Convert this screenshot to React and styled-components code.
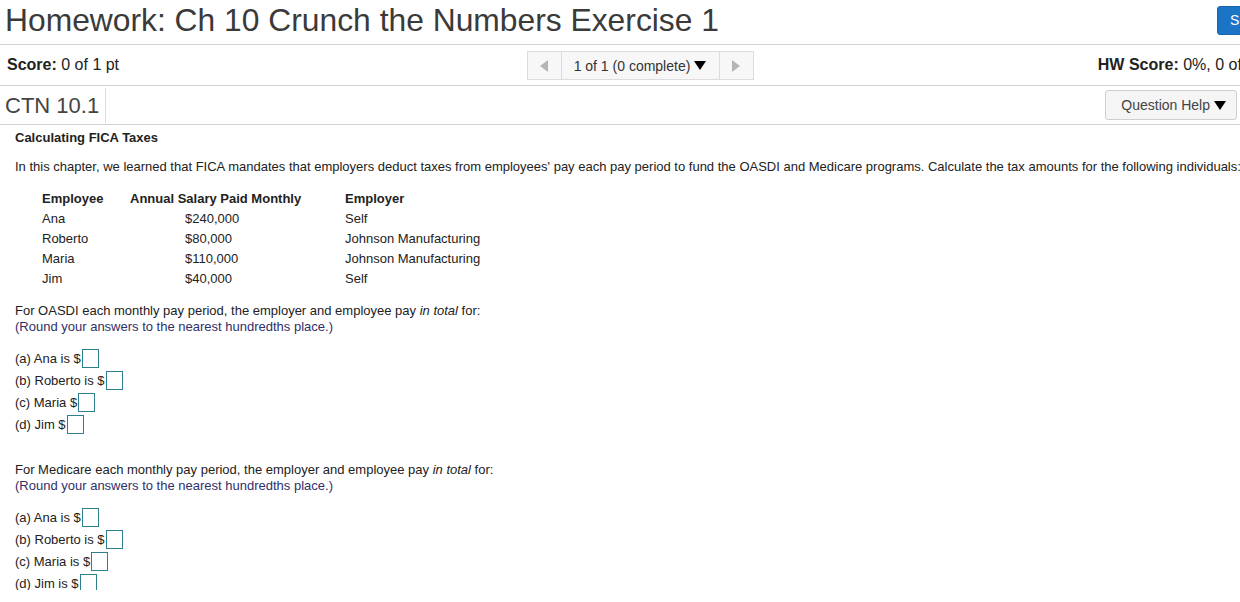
import React from "react";
import styled, { createGlobalStyle } from "styled-components";

const Global = createGlobalStyle`
  html, body { margin: 0; padding: 0; background: #fff; overflow: hidden; }
  body { font-family: "Liberation Sans", Arial, sans-serif; }
`;

const Page = styled.div`
  width: 1280px;
  height: 590px;
  overflow: hidden;
  background: #fff;
`;

const TitleBar = styled.header`
  height: 45px;
  box-sizing: border-box;
  border-bottom: 1px solid #d2d2d2;
  display: flex;
  align-items: center;
  justify-content: space-between;
  padding: 0 5px;
`;

const Title = styled.h1`
  margin: 0;
  margin-top: -4px;
  font-size: 31.8px;
  font-weight: normal;
  color: #3a3a3a;
  line-height: 37px;
  white-space: nowrap;
`;

const SaveButton = styled.button`
  height: 29px;
  margin-top: -4px;
  padding: 0 12px;
  background: #1b74c5;
  color: #fff;
  border: 1px solid #1766ad;
  border-radius: 3px;
  font-family: inherit;
  font-size: 14px;
`;

const ScoreBar = styled.div`
  height: 41px;
  box-sizing: border-box;
  border-bottom: 1px solid #d2d2d2;
  display: grid;
  grid-template-columns: 1fr auto 1fr;
  align-items: center;
  padding: 0 7px;
  font-size: 16px;
  color: #222;
`;

const ScoreText = styled.div`
  white-space: nowrap;
  justify-self: ${(p) => (p.$right ? "end" : "start")};
  b { font-weight: bold; }
`;

const Pager = styled.div`
  display: flex;
  height: 29px;
  box-sizing: border-box;
  border: 1px solid #dcdcdc;
  background: #f7f7f7;
  margin-top: 1px;
`;

const PagerArrow = styled.div`
  width: 33px;
  display: flex;
  align-items: center;
  justify-content: center;
`;

const PagerLabel = styled.div`
  width: 159px;
  box-sizing: border-box;
  border-left: 1px solid #dcdcdc;
  border-right: 1px solid #dcdcdc;
  display: flex;
  align-items: center;
  justify-content: center;
  gap: 4px;
  font-size: 14px;
  color: #333;
`;

const Section = styled.div`
  width: 1240px;
`;

const QuestionBar = styled.div`
  height: 39px;
  box-sizing: border-box;
  border-bottom: 1px solid #d2d2d2;
  display: flex;
  align-items: center;
  padding: 0 3px 0 5px;
`;

const QuestionId = styled.div`
  font-size: 22px;
  color: #444;
  height: 35px;
  line-height: 35px;
  padding-right: 6px;
  border-right: 1px solid #dcdcdc;
`;

const HelpButton = styled.button`
  margin-left: auto;
  height: 30px;
  padding: 0 10px 0 15px;
  display: flex;
  align-items: center;
  gap: 4px;
  background: #f5f5f5;
  border: 1px solid #cfcfcf;
  border-radius: 3px;
  font-family: inherit;
  font-size: 14px;
  color: #444;
`;

const Content = styled.div`
  padding: 5px 0 0 15px;
  font-size: 13px;
  color: #222;
`;

const Heading = styled.div`
  font-weight: bold;
  line-height: 16px;
`;

const Para = styled.p`
  margin: ${(p) => p.$mt || 0}px 0 0;
  line-height: 16px;
  white-space: nowrap;
  color: ${(p) => (p.$note ? "#30306a" : "#222")};
`;

const Table = styled.div`
  margin: 13px 0 0 27px;
  display: grid;
  grid-template-columns: 88px 215px auto;
  grid-auto-rows: 20px;
  align-items: center;
  width: max-content;
`;

const HeadCell = styled.div`
  font-weight: bold;
`;

const Cell = styled.div`
  padding-left: ${(p) => p.$pad || 0}px;
`;

const Answers = styled.div`
  margin-top: ${(p) => p.$mt}px;
`;

const AnswerRow = styled.div`
  height: 22px;
  display: flex;
  align-items: center;
`;

const AnswerBox = styled.span`
  display: inline-block;
  width: 15px;
  height: 17px;
  border: 1px solid #2d7f8e;
  margin-left: 1px;
  background: #fff;
`;

const Tri = ({ dir = "down", color = "#000", w = 12, h = 9 }) => {
  let pts;
  if (dir === "down") pts = `0,0 ${w},0 ${w / 2},${h}`;
  else if (dir === "left") pts = `${w},0 ${w},${h} 0,${h / 2}`;
  else pts = `0,0 0,${h} ${w},${h / 2}`;
  return (
    <svg width={w} height={h} viewBox={`0 0 ${w} ${h}`}>
      <polygon points={pts} fill={color} />
    </svg>
  );
};

const employees = [
  ["Ana", "$240,000", "Self"],
  ["Roberto", "$80,000", "Johnson Manufacturing"],
  ["Maria", "$110,000", "Johnson Manufacturing"],
  ["Jim", "$40,000", "Self"],
];

const oasdi = ["(a) Ana is $", "(b) Roberto is $", "(c) Maria $", "(d) Jim $"];
const medicare = ["(a) Ana is $", "(b) Roberto is $", "(c) Maria is $", "(d) Jim is $"];

export default function App() {
  return (
    <Page>
      <Global />
      <TitleBar>
        <Title>Homework: Ch 10 Crunch the Numbers Exercise 1</Title>
        <SaveButton>Save</SaveButton>
      </TitleBar>
      <ScoreBar>
        <ScoreText>
          <b>Score:</b> 0 of 1 pt
        </ScoreText>
        <Pager>
          <PagerArrow>
            <Tri dir="left" color="#b5b5b5" w={8} h={12} />
          </PagerArrow>
          <PagerLabel>
            1 of 1 (0 complete) <Tri dir="down" w={12} h={9} />
          </PagerLabel>
          <PagerArrow>
            <Tri dir="right" color="#b5b5b5" w={8} h={12} />
          </PagerArrow>
        </Pager>
        <ScoreText $right>
          <b>HW Score:</b> 0%, 0 of 1 pt
        </ScoreText>
      </ScoreBar>
      <Section>
        <QuestionBar>
          <QuestionId>CTN 10.1</QuestionId>
          <HelpButton>
            Question Help <Tri dir="down" w={12} h={9} />
          </HelpButton>
        </QuestionBar>
        <Content>
          <Heading>Calculating FICA Taxes</Heading>
          <Para $mt={13}>
            In this chapter, we learned that FICA mandates that employers deduct taxes from employees' pay each pay
            period to fund the OASDI and Medicare programs. Calculate the tax amounts for the following individuals:
          </Para>
          <Table>
            <HeadCell>Employee</HeadCell>
            <HeadCell>Annual Salary Paid Monthly</HeadCell>
            <HeadCell>Employer</HeadCell>
            {employees.map(([n, s, e]) => (
              <React.Fragment key={n}>
                <Cell>{n}</Cell>
                <Cell $pad={55}>{s}</Cell>
                <Cell>{e}</Cell>
              </React.Fragment>
            ))}
          </Table>
          <Para $mt={15}>
            For OASDI each monthly pay period, the employer and employee pay <i>in total</i> for:
          </Para>
          <Para $note>(Round your answers to the nearest hundredths place.)</Para>
          <Answers $mt={12}>
            {oasdi.map((t) => (
              <AnswerRow key={t}>
                {t}
                <AnswerBox />
              </AnswerRow>
            ))}
          </Answers>
          <Para $mt={27}>
            For Medicare each monthly pay period, the employer and employee pay <i>in total</i> for:
          </Para>
          <Para $note>(Round your answers to the nearest hundredths place.)</Para>
          <Answers $mt={12}>
            {medicare.map((t) => (
              <AnswerRow key={t}>
                {t}
                <AnswerBox />
              </AnswerRow>
            ))}
          </Answers>
        </Content>
      </Section>
    </Page>
  );
}
